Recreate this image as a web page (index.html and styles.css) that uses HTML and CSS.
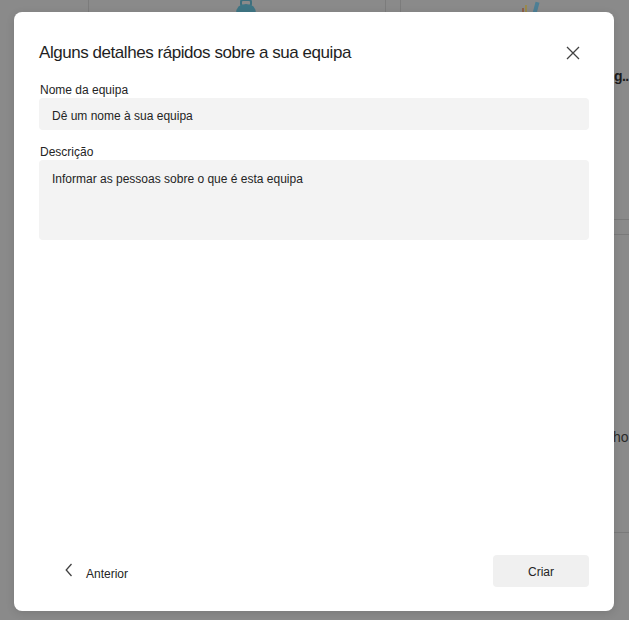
FILE: index.html
```html
<!DOCTYPE html>
<html lang="pt">
<head>
<meta charset="utf-8">
<title>Criar equipa</title>
<link rel="stylesheet" href="styles.css">
</head>
<body>
<div class="backdrop">
  <div class="bg-vline bg-v1"></div>
  <div class="bg-vline bg-v2"></div>
  <div class="bg-vline bg-v3"></div>
  <svg class="bg-bag" width="24" height="14" viewBox="0 0 24 14"><rect x="7" y="0" width="10" height="6" rx="2" fill="none" stroke="#3d6f7d" stroke-width="2"/><path d="M2 14 Q2 4 12 4 Q22 4 22 14 Z" fill="#3f7584"/></svg>
  <svg class="bg-chart" width="20" height="14" viewBox="0 0 20 14"><rect x="0" y="8" width="2" height="6" fill="#8c5f4a"/><rect x="3" y="5" width="2" height="9" fill="#9a8a4c"/><rect x="12" y="2" width="4" height="12" transform="rotate(15 14 8)" fill="#4d7f95"/></svg>
  <div class="bg-text bg-g">g..</div>
  <div class="bg-hline bg-h1"></div>
  <div class="bg-hline bg-h2"></div>
  <div class="bg-text bg-ho">ho</div>
  <div class="bg-hline bg-h3"></div>
</div>

<div class="dialog" role="dialog" aria-labelledby="dlg-title">
  <div class="dialog-head">
    <h1 id="dlg-title" class="dialog-title">Alguns detalhes rápidos sobre a sua equipa</h1>
    <button class="close-btn" aria-label="Fechar">
      <svg width="14" height="14" viewBox="0 0 14 14"><path d="M1 1 L13 13 M13 1 L1 13" stroke="#424242" stroke-width="1.3" fill="none"/></svg>
    </button>
  </div>

  <div class="dialog-body">
    <label class="field-label">Nome da equipa</label>
    <div class="input">Dê um nome à sua equipa</div>
    <label class="field-label field-gap">Descrição</label>
    <div class="textarea">Informar as pessoas sobre o que é esta equipa</div>
  </div>

  <div class="dialog-foot">
    <button class="back-btn">
      <svg width="8" height="14" viewBox="0 0 8 14"><path d="M6.5 1 L1.2 7 L6.5 13" stroke="#424242" stroke-width="1.3" fill="none"/></svg>
      <span>Anterior</span>
    </button>
    <button class="primary-btn">Criar</button>
  </div>
</div>
</body>
</html>
```

FILE: styles.css
```css
* { box-sizing: border-box; }

html, body {
  margin: 0;
  padding: 0;
  width: 629px;
  height: 620px;
  overflow: hidden;
}

body {
  background: #8a8a8a;
  font-family: "Liberation Sans", Arial, sans-serif;
  color: #242424;
  position: relative;
}

.backdrop {
  position: absolute;
  inset: 0;
}

.bg-vline {
  position: absolute;
  top: 0;
  width: 1px;
  height: 14px;
  background: #7c7c7c;
}
.bg-v1 { left: 88px; }
.bg-v2 { left: 385px; }
.bg-v3 { left: 400px; }

.bg-bag {
  position: absolute;
  left: 234px;
  top: 0;
}
.bg-chart {
  position: absolute;
  left: 522px;
  top: 0;
}

.bg-hline {
  position: absolute;
  left: 614px;
  width: 15px;
  height: 1px;
  background: #7a7a7a;
}
.bg-h1 { top: 219px; }
.bg-h2 { top: 234px; }
.bg-h3 { top: 532px; }

.bg-text {
  position: absolute;
  line-height: 18px;
  white-space: nowrap;
}
.bg-g {
  left: 614px;
  top: 67px;
  font-size: 14px;
  letter-spacing: -0.6px;
  font-weight: bold;
  color: #1c1c1c;
}
.bg-ho {
  left: 613px;
  top: 428px;
  color: #2a2a2a;
  font-size: 14px;
}

.dialog {
  position: absolute;
  left: 14px;
  top: 12px;
  width: 600px;
  height: 599px;
  background: #ffffff;
  border-radius: 8px;
  box-shadow: 0 2px 8px rgba(0,0,0,0.12);
  display: flex;
  flex-direction: column;
  padding: 29px 25px 24px 25px;
}

.dialog-head {
  display: flex;
  align-items: center;
  justify-content: space-between;
  height: 24px;
}

.dialog-title {
  margin: 0;
  font-size: 17px;
  letter-spacing: -0.45px;
  line-height: 24px;
  font-weight: normal;
  color: #1f1f1f;
}

.close-btn {
  border: 0;
  background: transparent;
  padding: 0;
  width: 14px;
  height: 14px;
  margin-right: 9px;
  display: flex;
  align-items: center;
  justify-content: center;
  cursor: pointer;
}

.dialog-body {
  display: flex;
  flex-direction: column;
  flex: 1;
  padding-top: 17px;
}

.field-label {
  display: block;
  font-size: 12px;
  line-height: 16px;
  color: #242424;
  padding-left: 1px;
}

.field-gap {
  margin-top: 14px;
}

.input {
  height: 32px;
  background: #f3f3f3;
  border-radius: 4px;
  font-size: 12px;
  line-height: 16px;
  padding: 10px 13px 6px;
  color: #242424;
}

.textarea {
  height: 80px;
  background: #f3f3f3;
  border-radius: 4px;
  font-size: 12px;
  line-height: 16px;
  padding: 11px 13px;
  color: #242424;
}

.dialog-foot {
  display: flex;
  align-items: center;
  justify-content: space-between;
  height: 32px;
}

.back-btn {
  border: 0;
  background: transparent;
  font-family: inherit;
  font-size: 12px;
  color: #242424;
  display: flex;
  align-items: center;
  gap: 13px;
  padding: 0 0 0 26px;
  height: 32px;
  cursor: pointer;
}
.back-btn svg {
  position: relative;
  top: -1px;
}
.back-btn span {
  position: relative;
  top: 3px;
}

.primary-btn {
  border: 0;
  width: 96px;
  height: 32px;
  background: #f0f0f0;
  border-radius: 4px;
  font-family: inherit;
  font-size: 12px;
  color: #242424;
  padding: 2px 0 0;
  cursor: pointer;
}
```
